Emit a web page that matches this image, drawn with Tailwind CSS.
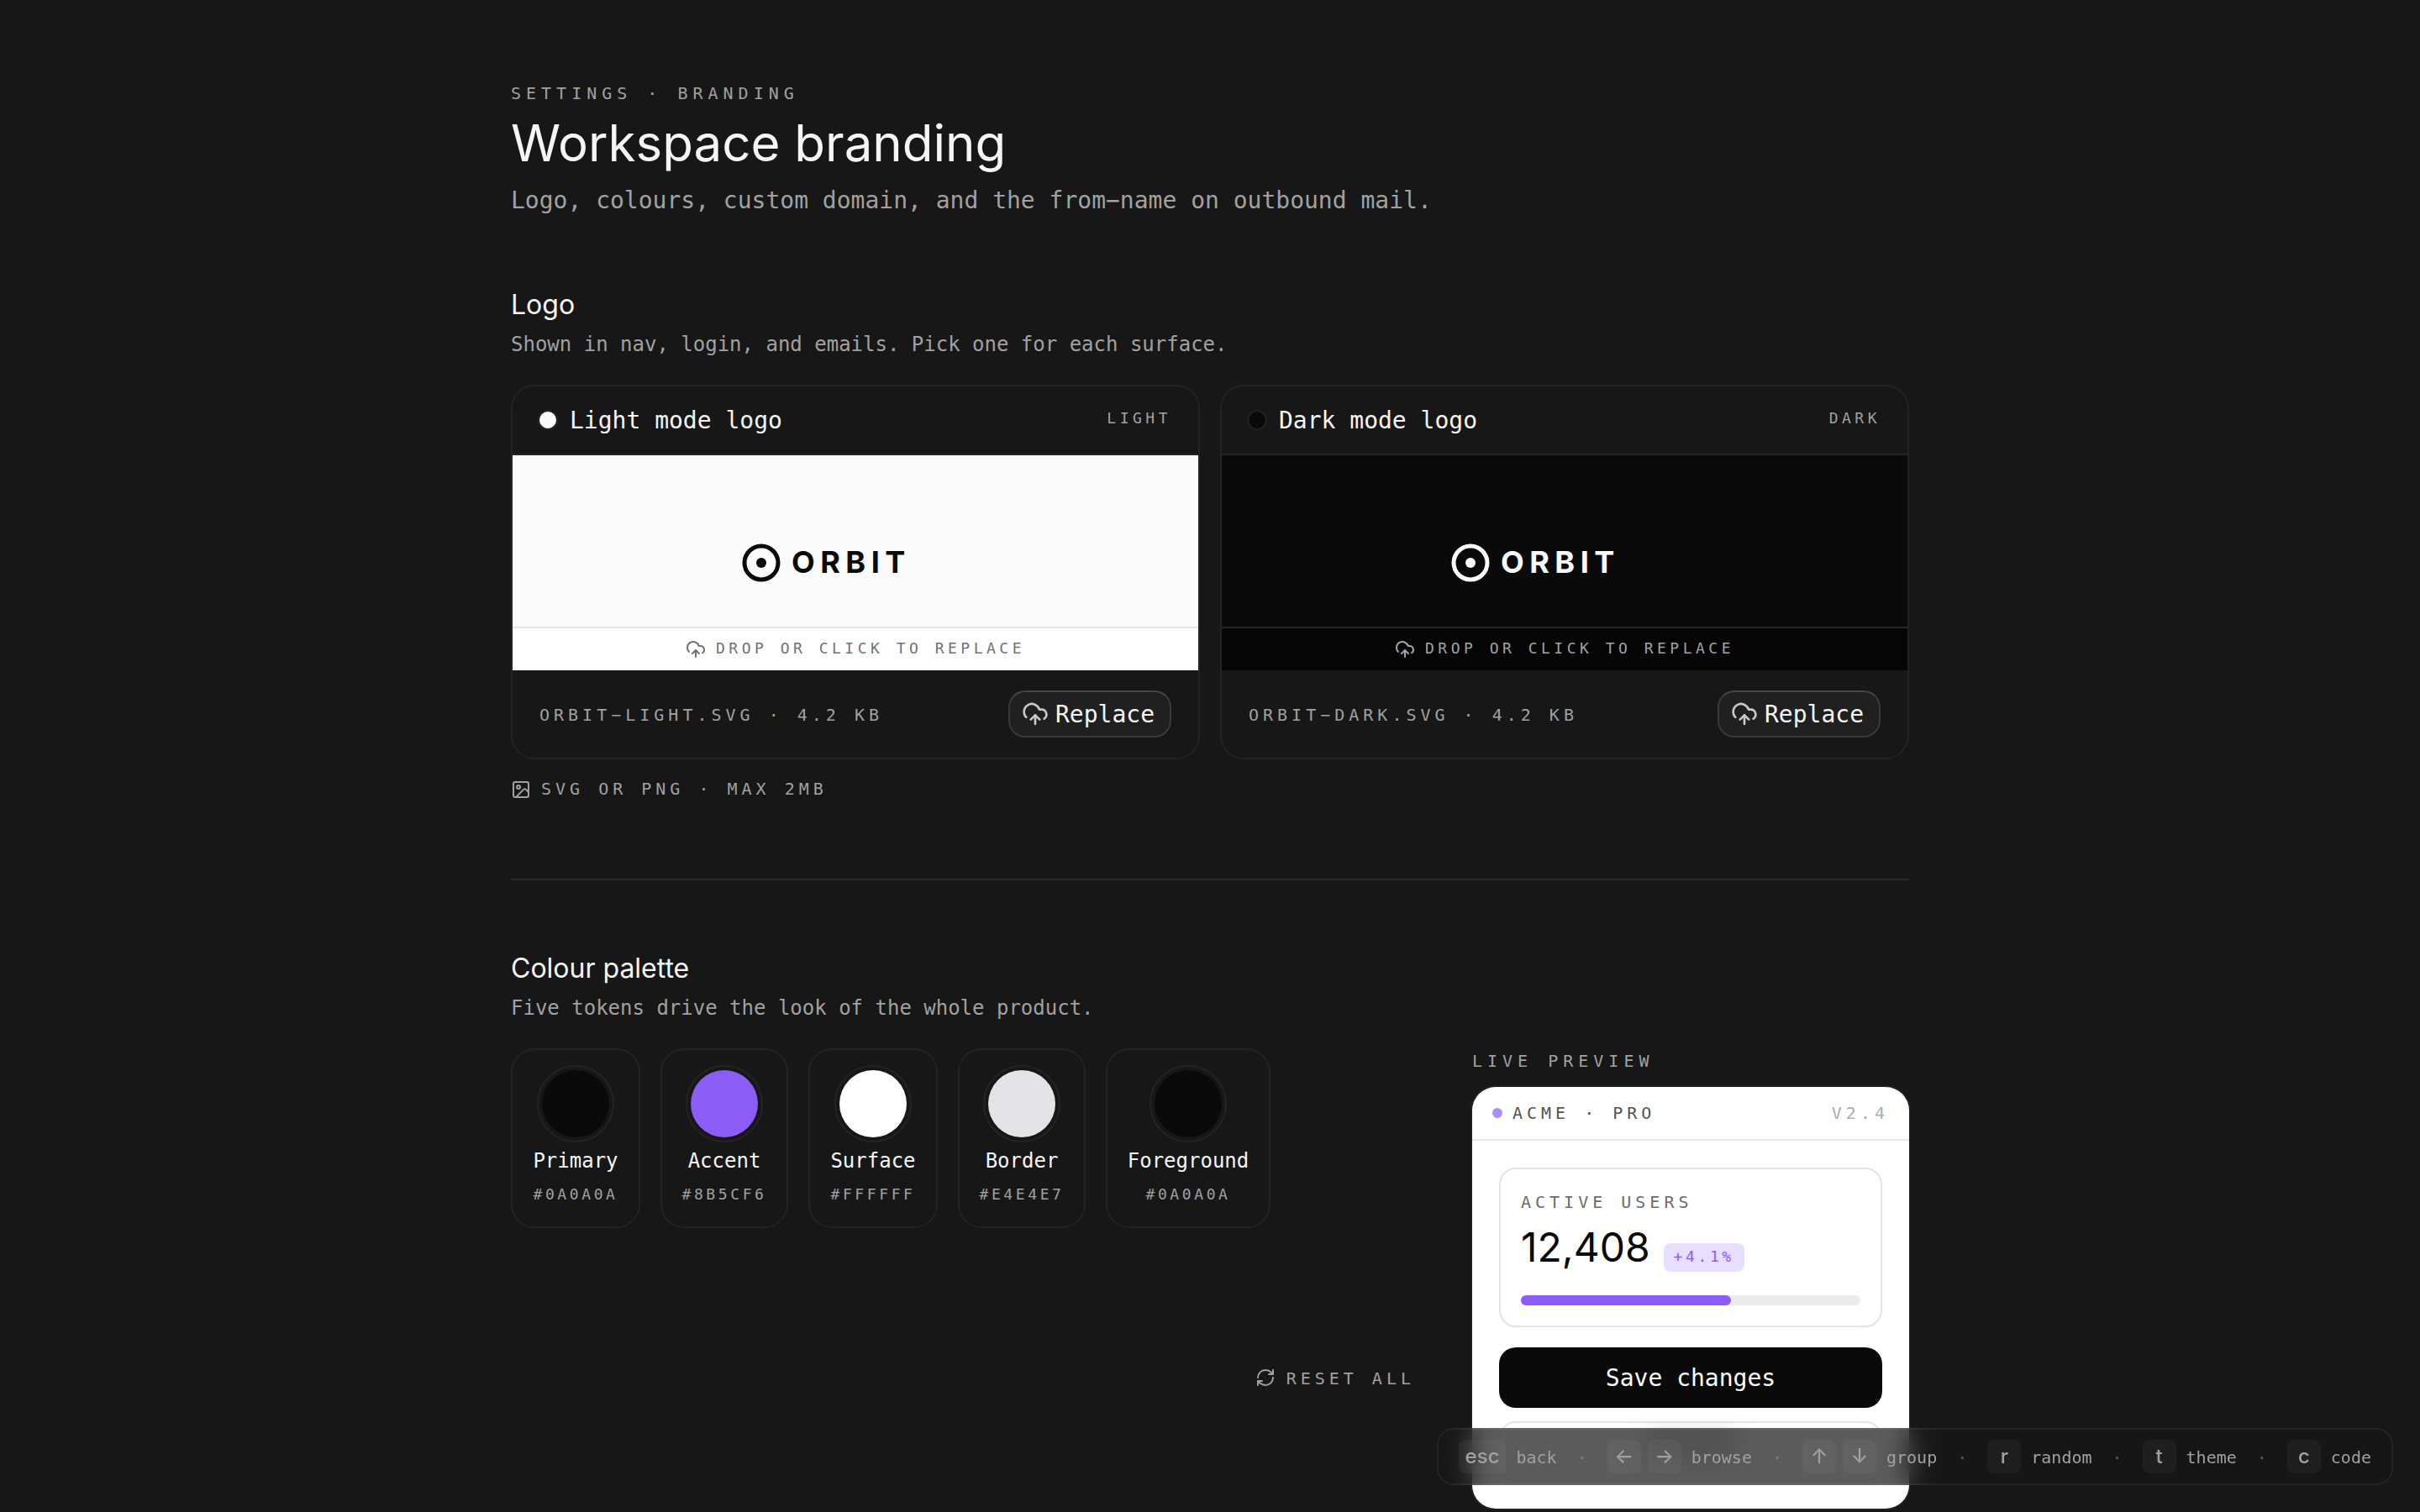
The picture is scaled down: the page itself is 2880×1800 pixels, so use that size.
<!DOCTYPE html>
<html lang="en">
<head>
    <meta charset="UTF-8">
    <meta name="viewport" content="width=device-width, initial-scale=1.0">
    <title>Workspace branding</title>
    <script src="https://cdn.jsdelivr.net/npm/@tailwindcss/browser@4"></script>
</head>
<body class="bg-[#171717] text-[#f5f5f5] font-['DejaVu_Sans_Mono',monospace] h-[1800px] overflow-hidden">
    <!-- Shared icons -->
    <svg class="hidden">
        <symbol id="upload" viewBox="0 0 24 24" fill="none" stroke="currentColor" stroke-width="2" stroke-linecap="round" stroke-linejoin="round">
            <path d="M12 13v8"/><path d="M4 14.899A7 7 0 1 1 15.71 8h1.79a4.5 4.5 0 0 1 2.5 8.242"/><path d="m8 17 4-4 4 4"/>
        </symbol>
        <symbol id="picture" viewBox="0 0 24 24" fill="none" stroke="currentColor" stroke-width="2" stroke-linecap="round" stroke-linejoin="round">
            <rect width="18" height="18" x="3" y="3" rx="2"/><circle cx="9" cy="9" r="2"/><path d="m21 15-3.086-3.086a2 2 0 0 0-2.828 0L6 21"/>
        </symbol>
        <symbol id="refresh" viewBox="0 0 24 24" fill="none" stroke="currentColor" stroke-width="2" stroke-linecap="round" stroke-linejoin="round">
            <path d="M3 12a9 9 0 0 1 9-9 9.75 9.75 0 0 1 6.74 2.74L21 8"/><path d="M21 3v5h-5"/><path d="M21 12a9 9 0 0 1-9 9 9.75 9.75 0 0 1-6.74-2.74L3 16"/><path d="M8 16H3v5"/>
        </symbol>
    </svg>

    <main class="w-[1664px] mx-auto pt-24">
        <header>
            <p class="text-[20px] leading-[30px] tracking-[0.3em] text-[#a1a1a1]">SETTINGS · BRANDING</p>
            <h1 class="mt-2 font-['Inter',sans-serif] text-[60px] leading-[72px]">Workspace branding</h1>
            <p class="mt-[11px] text-[28px] leading-[44px] text-[#a1a1a1]">Logo, colours, custom domain, and the from−name on outbound mail.</p>
        </header>

        <!-- Logo -->
        <section class="mt-[82px]">
            <h2 class="font-['Inter',sans-serif] text-[32px] leading-[40px]">Logo</h2>
            <p class="mt-[9px] text-[24px] leading-[36px] text-[#a1a1a1]">Shown in nav, login, and emails. Pick one for each surface.</p>

            <div class="mt-[30px] grid grid-cols-2 gap-6">
                <div class="rounded-[28px] border-2 border-[#232323] overflow-hidden">
                    <div class="h-[82px] px-8 flex items-center justify-between border-b-2 border-[#232323]">
                        <div class="flex items-center gap-4 text-[28px] leading-[40px]">
                            <span class="size-5 rounded-full bg-[#fafafa] ring-2 ring-[#232323]"></span>
                            <span class="pt-0.5">Light mode logo</span>
                        </div>
                        <span class="pb-[4px] text-[18px] leading-[28px] tracking-[0.25em] text-[#a1a1a1]">LIGHT</span>
                    </div>
                    <div class="h-[256px] bg-[#fafafa] text-[#0a0a0a] relative flex items-center justify-center">
                        <svg class="w-[280px] h-[56px]" viewBox="0 0 140 28">
                            <circle cx="14" cy="14" r="10" fill="none" stroke="currentColor" stroke-width="2.5"/>
                            <circle cx="14" cy="14" r="3" fill="currentColor"/>
                            <text x="32" y="20" font-family="Inter" font-size="18" font-weight="700" letter-spacing="3.24" fill="currentColor">ORBIT</text>
                        </svg>
                        <div class="absolute inset-x-0 bottom-0 h-[52px] flex items-center justify-center gap-3 bg-white border-t-2 border-[#e4e4e7] text-[#71717a] text-[18px] leading-[28px] tracking-[0.25em]">
                            <svg class="size-6"><use href="#upload"/></svg>
                            <span class="pb-0.5">DROP OR CLICK TO REPLACE</span>
                        </div>
                    </div>
                    <div class="h-[104px] px-8 flex items-center justify-between">
                        <span class="pt-0.5 text-[20px] tracking-[0.25em] text-[#a1a1a1]">ORBIT−LIGHT.SVG · 4.2 KB</span>
                        <button class="h-14 pl-[14px] pr-[18px] flex items-center gap-2 rounded-[20px] border-2 border-[#3a3a3a] border-t-[#464646] bg-[#202020] text-[28px]">
                            <svg class="size-8 text-[#c8c8c8]"><use href="#upload"/></svg>
                            <span class="pt-0.5">Replace</span>
                        </button>
                    </div>
                </div>

                <div class="rounded-[28px] border-2 border-[#232323] overflow-hidden">
                    <div class="h-[82px] px-8 flex items-center justify-between border-b-2 border-[#232323]">
                        <div class="flex items-center gap-4 text-[28px] leading-[40px]">
                            <span class="size-5 rounded-full bg-[#0a0a0a] ring-2 ring-[#232323]"></span>
                            <span class="pt-0.5">Dark mode logo</span>
                        </div>
                        <span class="pb-[4px] text-[18px] leading-[28px] tracking-[0.25em] text-[#a1a1a1]">DARK</span>
                    </div>
                    <div class="h-[256px] bg-[#0a0a0a] text-[#fafafa] relative flex items-center justify-center">
                        <svg class="w-[280px] h-[56px]" viewBox="0 0 140 28">
                            <circle cx="14" cy="14" r="10" fill="none" stroke="currentColor" stroke-width="2.5"/>
                            <circle cx="14" cy="14" r="3" fill="currentColor"/>
                            <text x="32" y="20" font-family="Inter" font-size="18" font-weight="700" letter-spacing="3.24" fill="currentColor">ORBIT</text>
                        </svg>
                        <div class="absolute inset-x-0 bottom-0 h-[52px] flex items-center justify-center gap-3 bg-[#050505] border-t-2 border-[#27272a] text-[#a1a1aa] text-[18px] leading-[28px] tracking-[0.25em]">
                            <svg class="size-6"><use href="#upload"/></svg>
                            <span class="pb-0.5">DROP OR CLICK TO REPLACE</span>
                        </div>
                    </div>
                    <div class="h-[104px] px-8 flex items-center justify-between">
                        <span class="pt-0.5 text-[20px] tracking-[0.25em] text-[#a1a1a1]">ORBIT−DARK.SVG · 4.2 KB</span>
                        <button class="h-14 pl-[14px] pr-[18px] flex items-center gap-2 rounded-[20px] border-2 border-[#3a3a3a] border-t-[#464646] bg-[#202020] text-[28px]">
                            <svg class="size-8 text-[#c8c8c8]"><use href="#upload"/></svg>
                            <span class="pt-0.5">Replace</span>
                        </button>
                    </div>
                </div>
            </div>

            <div class="mt-6 h-6 flex items-center gap-3 text-[20px] leading-[24px] tracking-[0.25em] text-[#a1a1a1]">
                <svg class="size-6"><use href="#picture"/></svg>
                <span class="pb-[2px]">SVG OR PNG · MAX 2MB</span>
            </div>
        </section>

        <hr class="mt-[94px] border-t-2 border-[#2a2a2a]">

        <!-- Palette -->
        <section class="mt-[85px]">
            <h2 class="font-['Inter',sans-serif] text-[32px] leading-[40px]">Colour palette</h2>
            <p class="mt-[9px] text-[24px] leading-[36px] text-[#a1a1a1]">Five tokens drive the look of the whole product.</p>

            <div class="mt-[30px] flex justify-between">
                <div class="w-[1076px] flex flex-col">
                    <div id="swatches" class="flex gap-6"></div>
                    <button class="mt-[165px] self-end flex items-center gap-[13px] text-[20px] leading-[24px] tracking-[0.25em] text-[#a1a1a1]">
                        <svg class="size-6"><use href="#refresh"/></svg>
                        <span class="pt-0.5">RESET ALL</span>
                    </button>
                </div>

                <!-- Live preview -->
                <aside class="w-[520px]">
                    <p class="text-[20px] leading-[30px] tracking-[0.3em] text-[#a1a1a1]">LIVE PREVIEW</p>
                    <div class="mt-4 h-[502px] rounded-[28px] bg-white text-[#0a0a0a] ring-2 ring-[#212121]">
                        <div class="h-16 px-6 flex items-center justify-between border-b-2 border-[#e9e9e9] text-[20px] tracking-[0.25em]">
                            <div class="flex items-center gap-3 text-[#545454]">
                                <span class="size-3 rounded-full bg-[#ae8df9]"></span>
                                ACME · PRO
                            </div>
                            <span class="text-[#adadad]">V2.4</span>
                        </div>
                        <div class="p-8">
                            <div class="h-[190px] px-6 pt-[24px] rounded-[20px] border-2 border-[#e4e4e7]">
                                <p class="text-[20px] leading-[30px] tracking-[0.25em] text-[#6c6c6c]">ACTIVE USERS</p>
                                <div class="mt-[10px] flex items-baseline gap-4">
                                    <span class="font-['Inter',sans-serif] text-[48px] leading-[58px]">12,408</span>
                                    <span class="px-3 h-[34px] leading-[32px] rounded-lg bg-[#e8deff] text-[#8b5cf6] text-[18px] tracking-[0.2em]">+4.1%</span>
                                </div>
                                <div class="mt-[28px] h-3 rounded-full bg-[#ebebeb]">
                                    <div class="h-3 rounded-full bg-[#8b5cf6]" style="width: 62%"></div>
                                </div>
                            </div>
                            <button class="mt-6 pt-0.5 w-full h-[72px] rounded-[20px] bg-[#0a0a0a] text-white text-[28px]">Save changes</button>
                            <div class="mt-4 h-[72px] pb-4 flex items-center justify-center rounded-[20px] border-2 border-[#e4e4e7]">
                                <span class="w-[116px] h-5 rounded-full bg-[#0a0a0a]/30 blur-[12px]"></span>
                            </div>
                        </div>
                    </div>
                </aside>
            </div>
        </section>
    </main>

    <!-- Keyboard hints -->
    <div class="fixed right-8 bottom-8 h-[68px] px-6 flex items-center gap-6 rounded-[20px] border-2 border-white/6 bg-[#171717]/70 backdrop-blur-[16px] text-[20px] text-[#a1a1a1]">
        <div class="flex items-center gap-3">
            <kbd class="h-10 px-2 leading-[40px] rounded-lg bg-white/4 font-['Inter',sans-serif] font-medium text-[24px]">esc</kbd>
            <span class="pt-0.5">back</span>
        </div>
        <span class="pt-0.5 opacity-50">·</span>
        <div class="flex items-center gap-3">
            <span class="flex gap-2">
                <kbd class="size-10 rounded-lg bg-white/4 font-['Inter',sans-serif] font-medium text-[24px] text-center leading-[40px]">←</kbd>
                <kbd class="size-10 rounded-lg bg-white/4 font-['Inter',sans-serif] font-medium text-[24px] text-center leading-[40px]">→</kbd>
            </span>
            <span class="pt-0.5">browse</span>
        </div>
        <span class="pt-0.5 opacity-50">·</span>
        <div class="flex items-center gap-3">
            <span class="flex gap-2">
                <kbd class="size-10 rounded-lg bg-white/4 font-['Inter',sans-serif] font-medium text-[24px] text-center leading-[40px]">↑</kbd>
                <kbd class="size-10 rounded-lg bg-white/4 font-['Inter',sans-serif] font-medium text-[24px] text-center leading-[40px]">↓</kbd>
            </span>
            <span class="pt-0.5">group</span>
        </div>
        <span class="pt-0.5 opacity-50">·</span>
        <div class="flex items-center gap-3">
            <kbd class="size-10 rounded-lg bg-white/4 font-['Inter',sans-serif] font-medium text-[24px] text-center leading-[40px]">r</kbd>
            <span class="pt-0.5">random</span>
        </div>
        <span class="pt-0.5 opacity-50">·</span>
        <div class="flex items-center gap-3">
            <kbd class="size-10 rounded-lg bg-white/4 font-['Inter',sans-serif] font-medium text-[24px] text-center leading-[40px]">t</kbd>
            <span class="pt-0.5">theme</span>
        </div>
        <span class="pt-0.5 opacity-50">·</span>
        <div class="flex items-center gap-3">
            <kbd class="size-10 rounded-lg bg-white/4 font-['Inter',sans-serif] font-medium text-[24px] text-center leading-[40px]">c</kbd>
            <span class="pt-0.5">code</span>
        </div>
    </div>

    <script>
        const tokens = [
            { name: 'Primary', hex: '#0A0A0A', width: 154 },
            { name: 'Accent', hex: '#8B5CF6', width: 152 },
            { name: 'Surface', hex: '#FFFFFF', width: 154 },
            { name: 'Border', hex: '#E4E4E7', width: 152 },
            { name: 'Foreground', hex: '#0A0A0A', width: 196 }
        ];

        // Build the swatch cards
        const swatches = document.getElementById('swatches');
        tokens.forEach(token => {
            const card = document.createElement('div');
            card.className = 'h-[214px] pt-[18px] flex flex-col items-center rounded-[28px] border-2 border-[#232323]';
            card.style.width = token.width + 'px';
            card.innerHTML = `
                <span class="size-[92px] p-1 rounded-full border-2 border-[#232323]">
                    <span class="block size-20 rounded-full" style="background: ${token.hex}"></span>
                </span>
                <span class="mt-[4px] text-[24px] leading-[36px]">${token.name}</span>
                <span class="mt-[8px] text-[18px] leading-[27px] tracking-[0.2em] text-[#a1a1a1]">${token.hex}</span>
            `;
            swatches.appendChild(card);
        });
    </script>
</body>
</html>
